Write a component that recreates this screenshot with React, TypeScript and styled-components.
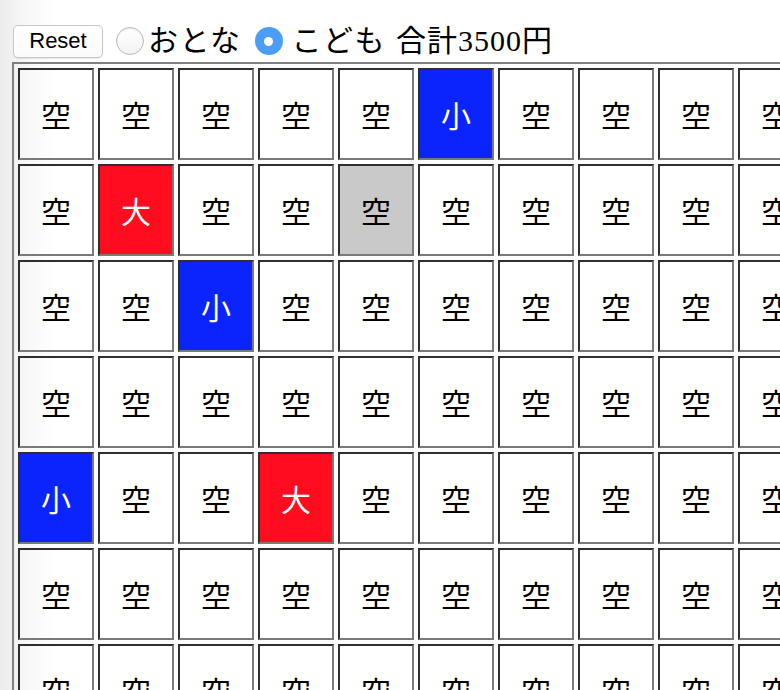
import React, { useState } from "react";
import styled, { createGlobalStyle } from "styled-components";

const Global = createGlobalStyle`
  html, body {
    margin: 0;
    padding: 0;
    overflow: hidden;
  }
  body {
    background: linear-gradient(to right, #ebebeb 0px, #f7f7f7 25px, #ffffff 55px);
    min-height: 100vh;
    font-family: "Liberation Serif", "Noto Sans CJK JP", serif;
  }
`;

const Page = styled.div`
  padding: 22px 0 0 12px;
  display: flex;
  flex-direction: column;
  gap: 2px;
`;

const Header = styled.div`
  display: flex;
  align-items: center;
  height: 38px;
  font-size: 30px;
  line-height: 1;
  color: #000;
`;

const ResetButton = styled.button`
  margin-left: 1px;
  width: 90px;
  height: 33px;
  padding: 0;
  border: 1px solid #c6c6c6;
  border-radius: 5px;
  background: linear-gradient(#ffffff, #fafafa);
  box-shadow: 0 1px 1px rgba(0, 0, 0, 0.08);
  font-family: "Liberation Sans", Arial, sans-serif;
  font-size: 22px;
  color: #000;
`;

const Radio = styled.span<{ $checked: boolean; $ml: number }>`
  margin-left: ${(p) => p.$ml}px;
  width: 28px;
  height: 28px;
  box-sizing: border-box;
  border-radius: 50%;
  flex: none;
  display: flex;
  align-items: center;
  justify-content: center;
  border: ${(p) => (p.$checked ? "none" : "1px solid #b9b9b9")};
  background: ${(p) =>
    p.$checked ? "#4a9ef7" : "linear-gradient(#ffffff, #f3f3f3)"};
  box-shadow: ${(p) =>
    p.$checked ? "none" : "inset 0 1px 2px rgba(0,0,0,0.08)"};
  &::after {
    content: "";
    display: ${(p) => (p.$checked ? "block" : "none")};
    width: 9px;
    height: 9px;
    border-radius: 50%;
    background: #fff;
  }
`;

const Label = styled.span<{ $ml: number; $spacing?: number }>`
  margin-left: ${(p) => p.$ml}px;
  white-space: nowrap;
  letter-spacing: ${(p) => p.$spacing ?? 1}px;
`;

const Board = styled.div`
  display: grid;
  grid-template-columns: repeat(10, 76px);
  grid-auto-rows: 92px;
  gap: 4px;
  padding: 4px;
  width: max-content;
  border-style: solid;
  border-width: 2px;
  border-color: #808080 #404040 #404040 #808080;
`;

const Cell = styled.div<{ $kind: "empty" | "big" | "small" | "hold" }>`
  box-sizing: border-box;
  border-style: solid;
  border-width: 2px;
  border-color: #2e2e2e #7a7a7a #7a7a7a #2e2e2e;
  display: flex;
  align-items: center;
  justify-content: center;
  font-family: "Noto Sans CJK JP", serif;
  font-size: 30px;
  line-height: 1;
  background: ${(p) =>
    p.$kind === "big"
      ? "#ff0c1f"
      : p.$kind === "small"
      ? "#0b23fc"
      : p.$kind === "hold"
      ? "#c9c9c9"
      : "transparent"};
  color: ${(p) => (p.$kind === "big" || p.$kind === "small" ? "#fff" : "#000")};
`;

type Kind = "empty" | "big" | "small" | "hold";

const ROWS = 7;
const COLS = 10;

const special: Record<string, Kind> = {
  "0-5": "small",
  "1-1": "big",
  "1-4": "hold",
  "2-2": "small",
  "4-0": "small",
  "4-3": "big",
};

const glyph: Record<Kind, string> = {
  empty: "空",
  hold: "空",
  big: "大",
  small: "小",
};

export default function App() {
  const [mode, setMode] = useState<"adult" | "child">("child");
  const cells: { key: string; kind: Kind }[] = [];
  for (let r = 0; r < ROWS; r++) {
    for (let c = 0; c < COLS; c++) {
      const key = `${r}-${c}`;
      cells.push({ key, kind: special[key] ?? "empty" });
    }
  }
  return (
    <>
      <Global />
      <Page>
        <Header>
          <ResetButton>Reset</ResetButton>
          <Radio
            $ml={13}
            $checked={mode === "adult"}
            onClick={() => setMode("adult")}
          />
          <Label $ml={4} $spacing={1.5}>おとな</Label>
          <Radio
            $ml={13}
            $checked={mode === "child"}
            onClick={() => setMode("child")}
          />
          <Label $ml={9} $spacing={1.5}>こども</Label>
          <Label $ml={10} $spacing={1}>合計3500円</Label>
        </Header>
        <Board>
          {cells.map((cell) => (
            <Cell key={cell.key} $kind={cell.kind}>
              {glyph[cell.kind]}
            </Cell>
          ))}
        </Board>
      </Page>
    </>
  );
}
